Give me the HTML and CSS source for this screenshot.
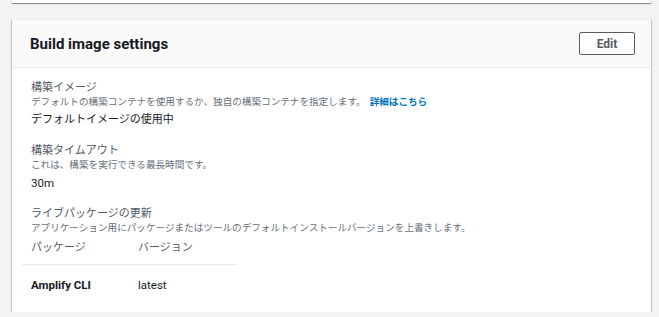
FILE: index.html
```html
<!DOCTYPE html>
<html lang="ja">
<head>
<meta charset="utf-8">
<title>Build image settings</title>
<link rel="stylesheet" href="styles.css">
</head>
<body>
<div class="page">
  <div class="prev-card"></div>
  <section class="card">
    <header class="card-header">
      <h2 class="card-title">Build image settings</h2>
      <button class="btn" type="button">Edit</button>
    </header>
    <div class="card-body">
      <div class="field">
        <div class="field-label">構築イメージ</div>
        <div class="field-desc">デフォルトの構築コンテナを使用するか、独自の構築コンテナを指定します。<a class="link" href="#">詳細はこちら</a></div>
        <div class="field-value">デフォルトイメージの使用中</div>
      </div>
      <div class="field">
        <div class="field-label">構築タイムアウト</div>
        <div class="field-desc">これは、構築を実行できる最長時間です。</div>
        <div class="field-value latin">30m</div>
      </div>
      <div class="field">
        <div class="field-label">ライブパッケージの更新</div>
        <div class="field-desc">アプリケーション用にパッケージまたはツールのデフォルトインストールバージョンを上書きします。</div>
        <table class="pkg-table">
          <colgroup><col class="col-pkg"><col class="col-ver"></colgroup>
          <thead>
            <tr><th>パッケージ</th><th>バージョン</th></tr>
          </thead>
          <tbody>
            <tr><td class="pkg-name">Amplify CLI</td><td class="latin">latest</td></tr>
          </tbody>
        </table>
      </div>
    </div>
  </section>
</div>
</body>
</html>
```

FILE: styles.css
```css
html, body {
  margin: 0;
  padding: 0;
  background: #f2f3f3;
}

body {
  font-family: Roboto, "Noto Sans CJK JP", sans-serif;
  color: #16191f;
}

.page {
  padding: 0 8px 0 12px;
}

.prev-card {
  height: 3px;
  background: #ffffff;
  box-shadow: 0 1px 1px 0 rgba(0, 28, 36, 0.3), 1px 1px 1px 0 rgba(0, 28, 36, 0.15), -1px 1px 1px 0 rgba(0, 28, 36, 0.15);
  margin-bottom: 16px;
}

.card {
  background: #ffffff;
  border-top: 1px solid #eaeded;
  box-shadow: 0 1px 1px 0 rgba(0, 28, 36, 0.3), 1px 1px 1px 0 rgba(0, 28, 36, 0.15), -1px 1px 1px 0 rgba(0, 28, 36, 0.15);
}

.card-header {
  display: flex;
  align-items: center;
  justify-content: space-between;
  height: 47px;
  padding: 0 16px 0 18px;
  background: #fafafa;
  border-bottom: 1px solid #eaeded;
}

.card-title {
  margin: 0;
  font-size: 15px;
  font-weight: 700;
  line-height: 20px;
  color: #16191f;
}

.btn {
  width: 56px;
  height: 23px;
  padding: 0;
  background: #ffffff;
  border: 1px solid #545b64;
  border-radius: 2px;
  font-family: Roboto, sans-serif;
  font-size: 12px;
  font-weight: 700;
  color: #545b64;
}

.card-body {
  padding: 13px 19px 15px 19px;
}

.field + .field {
  margin-top: 16px;
}

.field-label {
  font-size: 11px;
  line-height: 14px;
  color: #545b64;
}

.field-desc {
  font-size: 9.6px;
  line-height: 13px;
  color: #687078;
}

.link {
  margin-left: 4px;
  color: #0073bb;
  font-weight: 700;
  text-decoration: none;
}

.field-value {
  margin-top: 4px;
  font-size: 11px;
  line-height: 16px;
  color: #16191f;
}

.latin {
  font-size: 11.5px;
}

.pkg-table {
  margin-left: -9px;
  border-collapse: collapse;
  table-layout: fixed;
  width: 216px;
}

.col-pkg {
  width: 107px;
}

.col-ver {
  width: 109px;
}

.pkg-table th {
  padding: 6px 9px 8px;
  text-align: left;
  font-size: 11px;
  font-weight: 400;
  line-height: 16px;
  color: #545b64;
  border-bottom: 1px solid #eaeded;
}

.pkg-table td {
  padding: 12px 9px 4px;
  font-size: 11.5px;
  line-height: 16px;
  color: #16191f;
}

.pkg-table .pkg-name {
  font-weight: 700;
}
```
